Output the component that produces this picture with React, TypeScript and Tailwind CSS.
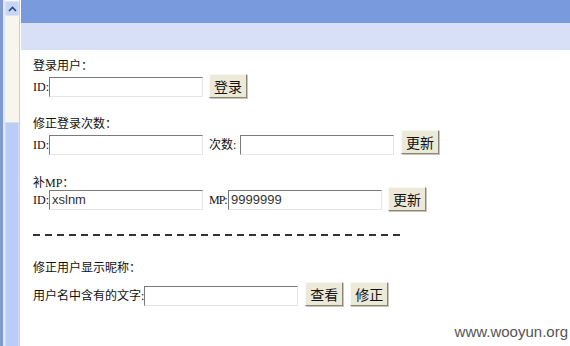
const cjk = "font-['SimSun','Noto_Sans_CJK_SC',sans-serif]";
const latin = "font-['Liberation_Serif','Noto_Sans_CJK_SC',serif]";

function TextBox({ value = "", className = "" }: { value?: string; className?: string }) {
  return (
    <div
      className={`flex h-[20px] w-[154px] items-center border border-t-[#7a7a7a] border-l-[#7a7a7a] border-r-[#e4e4e4] border-b-[#e4e4e4] bg-white pl-[2px] font-['Liberation_Sans',Arial,sans-serif] text-[13px] text-[#333] ${className}`}
    >
      {value}
    </div>
  );
}

function Btn({ label }: { label: string }) {
  return (
    <div
      className={`flex h-[24px] w-[38px] items-center justify-center border border-t-[#fafaf5] border-l-[#fafaf5] border-r-[#8a8778] border-b-[#8a8778] bg-[#ece9d8] text-[14px] text-[#111] shadow-[1px_1px_0_#c9c6b8] ${cjk}`}
    >
      {label}
    </div>
  );
}

function Label({ children, className = "" }: { children: React.ReactNode; className?: string }) {
  return <div className={`h-[12px] text-[12px] leading-[12px] text-[#111] ${cjk} ${className}`}>{children}</div>;
}

function Small({ children, className = "" }: { children: React.ReactNode; className?: string }) {
  return <span className={`whitespace-nowrap text-[12px] leading-[12px] text-[#111] ${cjk} ${className}`}>{children}</span>;
}

function Tag({ children, className = "" }: { children: React.ReactNode; className?: string }) {
  return <span className={`whitespace-nowrap text-[12px] leading-[12px] text-[#111] ${latin} ${className}`}>{children}</span>;
}

function Scrollbar() {
  return (
    <div className="flex h-[346px] w-[21px] shrink-0 bg-[#fbfaf5]">
      <div className="w-[3px] bg-[#7f9bd2]" />
      <div className="w-[2px] bg-[#dfe6f5]" />
      <div className="flex w-[14px] flex-col">
        <div className="mt-[1px] flex h-[15px] items-center justify-center rounded-[2px] border border-[#d8e2f8] bg-[#c6d6f6]">
          <svg width="9" height="6" viewBox="0 0 9 6">
            <path d="M1 5 L4.5 1.5 L8 5" stroke="#34466e" strokeWidth="1.6" fill="none" />
          </svg>
        </div>
        <div className="h-[106px] bg-[#f7f5ec]" />
        <div className="flex-1 border-x border-t border-[#d0dcf8] bg-[#b9cdf6]" />
      </div>
      <div className="w-[1px] bg-[#c8cfdc]" />
      <div className="w-[1px] bg-white" />
    </div>
  );
}

export default function App() {
  return (
    <div className="relative flex h-[346px] w-[570px] overflow-hidden bg-white">
      <Scrollbar />
      <div className="flex flex-1 flex-col">
        <div className="h-[23px] bg-[#7a9ade]" />
        <div className="h-[27px] bg-[#d8e0f8]" />
        <div className="flex flex-col pl-[12px]">
          <Label className="mt-[9px]">登录用户：</Label>
          <div className="mt-[3px] flex items-end">
            <Tag className="mb-[4px] w-[16px]">ID:</Tag>
            <TextBox />
            <div className="ml-[6px] mb-[-1px]">
              <Btn label="登录" />
            </div>
          </div>

          <Label className="mt-[20px]">修正登录次数：</Label>
          <div className="mt-[1px] flex items-end">
            <Tag className="mb-[4px] w-[16px]">ID:</Tag>
            <TextBox />
            <Small className="mb-[4px] ml-[6px] w-[31px]">
              次数<span className={latin}>:</span>
            </Small>
            <TextBox />
            <div className="ml-[7px] mb-[1px]">
              <Btn label="更新" />
            </div>
          </div>

          <Label className="mt-[21px]">
            补<span className={latin}>MP</span>：
          </Label>
          <div className="mt-[-1px] flex items-end">
            <Tag className="mb-[4px] w-[16px]">ID:</Tag>
            <TextBox value="xslnm" />
            <Tag className="mb-[4px] ml-[6px] w-[19px] tracking-[-1px]">MP:</Tag>
            <TextBox value="9999999" />
            <div className="ml-[6px] mb-[-1px]">
              <Btn label="更新" />
            </div>
          </div>

          <div className="mt-[24px] h-[2px] w-[367px] bg-[repeating-linear-gradient(to_right,#333_0_7px,transparent_7px_12px)]" />

          <Label className="mt-[25px]">修正用户显示昵称：</Label>
          <div className="mt-[9px] flex items-end">
            <Small className="mb-[4px]">
              用户名中含有的文字<span className={latin}>:</span>
            </Small>
            <TextBox className="w-[153px]" />
            <div className="ml-[7px]">
              <Btn label="查看" />
            </div>
            <div className="ml-[7px]">
              <Btn label="修正" />
            </div>
          </div>
        </div>
      </div>
      <div className="absolute bottom-[3px] right-[2px] font-['Liberation_Sans',Arial,sans-serif] text-[15px] text-[#555]">
        www.wooyun.org
      </div>
    </div>
  );
}
